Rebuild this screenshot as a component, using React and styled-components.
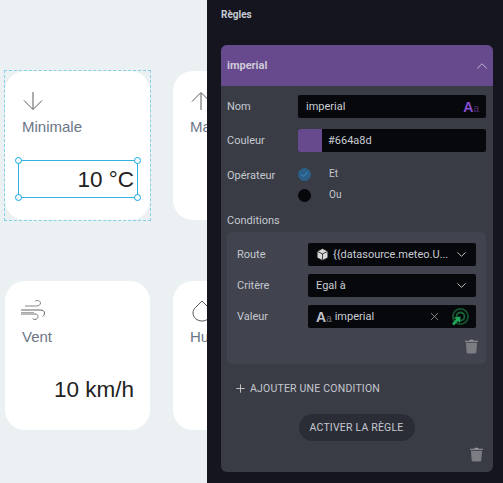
import React from 'react';
import styled, { createGlobalStyle } from 'styled-components';
import { ChevronDown, ChevronUp, Check, Plus, X } from 'lucide-react';

const GlobalStyle = createGlobalStyle`
  html, body {
    margin: 0;
    padding: 0;
    background: #ebf0f3;
    overflow: hidden;
  }
  * {
    box-sizing: border-box;
  }
`;

const ArrowIcon = ({ up }) => (
  <svg width="21" height="20" viewBox="0 0 21 20" fill="none" stroke="#5c5c5c" strokeWidth="1">
    {up ? <path d="M11 19V2M2 10.500 11 1.500l9 9" /> : <path d="M11 1v17M2 9.500l9 9 9-9" />}
  </svg>
);

const WindIcon = () => (
  <WindSvg width="25" height="20" viewBox="0 0 25 20" fill="none" stroke="#666" strokeWidth="1">
    <path d="M4 6h11c3 0 4.500-1.500 4.500-3S18 .5 16 .5c-1 0-1.800.5-2 1" stroke="#888" />
    <path d="M0 10h19c3 0 4.500 1 4.500 3s-1 3-2 3.500" />
    <path d="M0 14h14c2 0 3 1 3 2.500s-1.500 3-3 3-2-.5-2.500-1" stroke="#777" />
    <path d="M0 12.500h13" stroke="#aaa" />
  </WindSvg>
);

const DropIcon = () => (
  <DropSvg width="20" height="22" viewBox="0 0 20 22" fill="none" stroke="#555" strokeWidth="1">
    <path d="M10 1 3.500 7.500C1.500 9.500 1 11 1 13c0 4.500 4 8 9 8s9-3.500 9-8c0-2-.5-3.500-2.500-5.500Z" />
  </DropSvg>
);

const TypeIcon = ({ accent }) => (
  <TypeGlyph $accent={accent}>
    A<small>a</small>
  </TypeGlyph>
);

const BoxIcon = () => (
  <svg width="13" height="13" viewBox="0 0 12 12" fill="#d8d8d8" stroke="#111" strokeWidth=".7">
    <path d="M6 .5 11 3v6l-5 2.500L1 9V3Z" />
    <path d="M1 3l5 2.500L11 3M6 5.500v6" />
  </svg>
);

const TargetIcon = () => (
  <svg width="18" height="18" viewBox="0 0 18 18" fill="none">
    <circle cx="9.500" cy="8.500" r="7.600" stroke="#14532d" strokeWidth="1.800" />
    <circle cx="9.500" cy="8.500" r="4" stroke="#166534" strokeWidth="1.800" />
    <path d="M9.500 8.500 9 15 7 13 3 17.500 1 15.500 5 11.500 3 9.500Z" fill="#22a85a" />
  </svg>
);

const TrashIcon = () => (
  <svg width="13" height="15" viewBox="0 0 14 15" fill="#7c7d82">
    <path d="M4.500 1.200 5.500.2h3l1 1H14v1.300H0V1.200Z" fill="#9a9ba0" />
    <path d="M1 3.500h12l-.8 10.200c0 .8-.6 1.300-1.300 1.300H3.100c-.7 0-1.300-.5-1.300-1.300Z" />
  </svg>
);

const cards = [
  { label: 'Minimale', value: '10 °C', icon: <ArrowIcon />, selected: true },
  { label: 'Maximale', value: '10 °C', icon: <ArrowIcon up /> },
  { label: 'Vent', value: '10 km/h', icon: <WindIcon /> },
  { label: 'Humidité', value: '10 %', icon: <DropIcon /> },
];

const App = () => {
  return (
    <Page>
      <GlobalStyle />
      <Canvas>
        {cards.map((card) => (
          <Card key={card.label}>
            {card.selected && <DashedFrame />}
            <IconSlot>{card.icon}</IconSlot>
            <CardLabel>{card.label}</CardLabel>
            <CardValue $selected={card.selected}>
              {card.value}
              {card.selected && (
                <>
                  <Handle $top $left />
                  <Handle $top />
                  <Handle $left />
                  <Handle />
                </>
              )}
            </CardValue>
          </Card>
        ))}
      </Canvas>
      <Panel>
        <PanelTitle>Règles</PanelTitle>
        <RuleCard>
          <RuleHeader>
            <span>imperial</span>
            <ChevronUp size={18} strokeWidth={1.300} color="#c4bccf" />
          </RuleHeader>
          <RuleBody>
            <FieldRow>
              <FieldLabel>Nom</FieldLabel>
              <Input>
                <InputText>imperial</InputText>
                <TypeIcon accent />
              </Input>
            </FieldRow>
            <FieldRow>
              <FieldLabel>Couleur</FieldLabel>
              <ColorInput>
                <Swatch />
                <ColorValue>#664a8d</ColorValue>
              </ColorInput>
            </FieldRow>
            <OperatorRow>
              <OperatorLabel>Opérateur</OperatorLabel>
              <RadioGroup>
                <RadioOption>
                  <Radio $checked>
                    <Check size={9} strokeWidth={2} color="#3a9fe0" />
                  </Radio>
                  <RadioText>Et</RadioText>
                </RadioOption>
                <RadioOption>
                  <Radio />
                  <RadioText>Ou</RadioText>
                </RadioOption>
              </RadioGroup>
            </OperatorRow>
            <SectionLabel>Conditions</SectionLabel>
            <ConditionBox>
              <ConditionRow>
                <FieldLabel>Route</FieldLabel>
                <Select>
                  <BoxIcon />
                  <SelectText>{'{{datasource.meteo.U...'}</SelectText>
                  <ChevronDown size={15} strokeWidth={1.500} color="#ccc" />
                </Select>
              </ConditionRow>
              <ConditionRow>
                <FieldLabel>Critère</FieldLabel>
                <Select>
                  <SelectText>Egal à</SelectText>
                  <ChevronDown size={15} strokeWidth={1.500} color="#ccc" />
                </Select>
              </ConditionRow>
              <ConditionRow>
                <FieldLabel>Valeur</FieldLabel>
                <Select>
                  <TypeIcon />
                  <ValueText>imperial</ValueText>
                  <X size={13} strokeWidth={1.200} color="#bbb" />
                  <TargetSlot>
                    <TargetIcon />
                  </TargetSlot>
                </Select>
              </ConditionRow>
              <TrashRow>
                <TrashIcon />
              </TrashRow>
            </ConditionBox>
            <AddCondition>
              <Plus size={13} strokeWidth={1.500} color="#ddd" />
              Ajouter une condition
            </AddCondition>
            <ActivateRow>
              <ActivateButton>Activer la règle</ActivateButton>
            </ActivateRow>
            <FooterTrash>
              <TrashIcon />
            </FooterTrash>
          </RuleBody>
        </RuleCard>
      </Panel>
    </Page>
  );
};

const WindSvg = styled.svg`
  margin: -2px 0 0 -1px;
`;

const DropSvg = styled.svg`
  margin-left: 2px;
`;

const Page = styled.div`
  display: flex;
  width: 503px;
  height: 483px;
  overflow: hidden;
`;

const Canvas = styled.div`
  width: 207px;
  flex-shrink: 0;
  display: grid;
  grid-template-columns: 145px 145px;
  grid-auto-rows: 149px;
  column-gap: 23px;
  row-gap: 61px;
  padding: 71px 0 0 5px;
  background: #ebf0f3;
  overflow: hidden;
`;

const Card = styled.div`
  position: relative;
  background: #fff;
  border-radius: 20px;
  padding: 19px 12px 0 17px;
  font-family: 'Liberation Sans', Arial, sans-serif;
`;

const DashedFrame = styled.div`
  position: absolute;
  inset: -1px;
  border: 1px dashed #87cfe9;
`;

const IconSlot = styled.div`
  height: 22px;
  display: flex;
  align-items: center;
`;

const CardLabel = styled.div`
  margin-top: 6px;
  font-size: 15px;
  line-height: 18px;
  color: #6b7686;
`;

const CardValue = styled.div`
  position: relative;
  height: 38px;
  margin: 24px 0 0 -4px;
  padding-right: 3px;
  text-align: right;
  font-size: 22.500px;
  line-height: 37px;
  color: #222;
  white-space: nowrap;
  border: 1px solid ${(props) => (props.$selected ? '#35b0e2' : 'transparent')};
`;

const Handle = styled.span`
  position: absolute;
  width: 7px;
  height: 7px;
  border-radius: 50%;
  background: #fff;
  border: 1.500px solid #12a5e0;
  ${(props) => (props.$top ? 'top: -4px;' : 'bottom: -4px;')}
  ${(props) => (props.$left ? 'left: -4px;' : 'right: -4px;')}
`;

const Panel = styled.aside`
  flex: 1;
  background: #14151f;
  padding: 8px 10px 0 14px;
  font-family: Roboto, Arial, sans-serif;
  color: #cfd2d8;
`;

const PanelTitle = styled.div`
  font-size: 10px;
  font-weight: 700;
  line-height: 13px;
  color: #c6cbd3;
`;

const RuleCard = styled.div`
  margin-top: 24px;
  height: 427px;
  border-radius: 6px;
  overflow: hidden;
  background: #3a3c45;
`;

const RuleHeader = styled.div`
  height: 41px;
  padding: 0 2px 0 6px;
  display: flex;
  align-items: center;
  justify-content: space-between;
  background: #664a8d;
  font-size: 11px;
  font-weight: 700;
  color: #cfc9d8;
`;

const RuleBody = styled.div`
  padding: 9px 7px 0 6px;
`;

const FieldRow = styled.div`
  display: flex;
  align-items: center;
  height: 23px;
  margin-bottom: 11px;
`;

const FieldLabel = styled.div`
  width: 71px;
  flex-shrink: 0;
  font-size: 11px;
  color: #c4c8cf;
`;

const OperatorLabel = styled(FieldLabel)`
  padding-top: 1px;
`;

const Input = styled.div`
  flex: 1;
  height: 23px;
  display: flex;
  align-items: center;
  justify-content: space-between;
  padding: 0 7px 0 8px;
  background: #07080c;
  border-radius: 2px;
`;

const InputText = styled.span`
  font-size: 11px;
  color: #c9cdd3;
`;

const TypeGlyph = styled.span`
  font-family: 'Liberation Sans', Arial, sans-serif;
  font-size: 14px;
  font-weight: 700;
  line-height: 1;
  color: ${(props) => (props.$accent ? '#8a4fd0' : '#bfc3c9')};
  small {
    font-size: 10px;
    font-weight: 400;
    opacity: 0.55;
  }
`;

const ColorInput = styled.div`
  flex: 1;
  height: 23px;
  display: flex;
  align-items: center;
  background: #07080c;
  border-radius: 2px;
  overflow: hidden;
`;

const Swatch = styled.div`
  width: 24px;
  height: 100%;
  background: #664a8d;
`;

const ColorValue = styled.span`
  margin-left: 6px;
  font-size: 11px;
  color: #c9cdd3;
`;

const OperatorRow = styled.div`
  display: flex;
  margin-top: 16px;
`;

const RadioGroup = styled.div`
  display: flex;
  flex-direction: column;
  gap: 8px;
`;

const RadioOption = styled.div`
  display: flex;
  align-items: center;
  gap: 18px;
  height: 13px;
`;

const RadioText = styled.span`
  margin-top: -2px;
  font-size: 10px;
  color: #c4c8cf;
`;

const Radio = styled.span`
  width: 13px;
  height: 13px;
  border-radius: 50%;
  display: flex;
  align-items: center;
  justify-content: center;
  background: ${(props) => (props.$checked ? '#2c5f88' : '#07080c')};
`;

const SectionLabel = styled.div`
  margin-top: 12px;
  font-size: 11px;
  line-height: 14px;
  color: #c4c8cf;
`;

const ConditionBox = styled.div`
  margin-top: 4px;
  height: 132px;
  padding: 11px 10px 0 10px;
  background: #41434e;
  border-radius: 5px;
`;

const ConditionRow = styled.div`
  display: flex;
  align-items: center;
  height: 23px;
  margin-bottom: 8px;
`;

const Select = styled.div`
  flex: 1;
  min-width: 0;
  height: 23px;
  display: flex;
  align-items: center;
  gap: 4px;
  padding: 0 7px 0 8px;
  background: #07080c;
  border-radius: 2px;
`;

const SelectText = styled.span`
  flex: 1;
  font-size: 11px;
  color: #c9cdd3;
  white-space: nowrap;
`;

const ValueText = styled(SelectText)`
  margin-left: -1px;
`;

const TargetSlot = styled.span`
  display: flex;
  margin: 0 0 0 6px;
`;

const TrashRow = styled.div`
  display: flex;
  justify-content: flex-end;
  margin-right: -2px;
  padding-top: 3px;
`;

const AddCondition = styled.div`
  display: flex;
  align-items: center;
  gap: 3px;
  margin: 17px 0 0 7px;
  height: 14px;
  font-size: 10.500px;
  letter-spacing: 0.2px;
  text-transform: uppercase;
  color: #c4c8cf;
`;

const ActivateRow = styled.div`
  display: flex;
  justify-content: center;
  margin-top: 19px;
`;

const ActivateButton = styled.button`
  width: 116px;
  height: 27px;
  padding: 0;
  border: none;
  border-radius: 14px;
  background: #2b2d36;
  font-family: Roboto, Arial, sans-serif;
  font-size: 10.500px;
  letter-spacing: 0.2px;
  text-transform: uppercase;
  color: #c4c8cf;
`;

const FooterTrash = styled.div`
  display: flex;
  justify-content: flex-end;
  margin: 6px 3px 0 0;
`;

export default App;
